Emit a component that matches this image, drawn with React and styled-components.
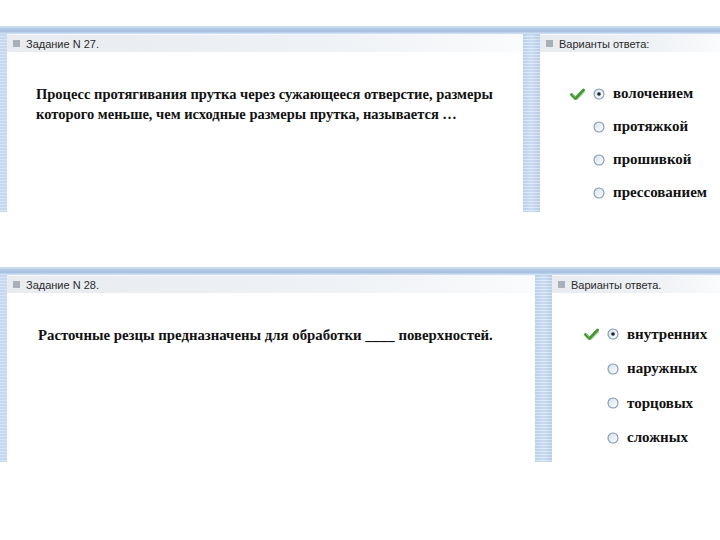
import styled, { createGlobalStyle } from "styled-components";

const GlobalStyle = createGlobalStyle`
  body {
    margin: 0;
    background: #fff;
  }
`;

const tasks = [
  {
    id: 27,
    title: "Задание N 27.",
    side: "Варианты ответа:",
    question: [
      "Процесс протягивания прутка через сужающееся отверстие, размеры",
      "которого меньше, чем исходные размеры прутка, называется …",
    ],
    answers: ["волочением", "протяжкой", "прошивкой", "прессованием"],
    mainWidth: 516,
    height: 178,
    row: 33,
    listTop: 25,
    size: 14.5,
    answerSize: 15,
    textLeft: 29,
    checkLeft: 30,
  },
  {
    id: 28,
    title: "Задание N 28.",
    side: "Варианты ответа.",
    question: ["Расточные резцы предназначены для обработки ____ поверхностей."],
    answers: ["внутренних", "наружных", "торцовых", "сложных"],
    mainWidth: 528,
    height: 187,
    row: 34.5,
    listTop: 24,
    size: 14.8,
    answerSize: 15,
    textLeft: 31,
    checkLeft: 32,
  },
];

function Check() {
  return (
    <svg width="15" height="12" viewBox="0 0 15 12">
      <path d="M1.5 6.5 L5.5 10.5 L13.5 2" fill="none" stroke="#9aa39a" strokeWidth="3.2" strokeLinecap="round" strokeLinejoin="round" transform="translate(0.6 0.8)" opacity="0.5" />
      <path d="M1.5 6.5 L5.5 10.5 L13.5 2" fill="none" stroke="#3f9a2e" strokeWidth="2.8" strokeLinecap="round" strokeLinejoin="round" />
      <path d="M2.5 6.5 L5.5 9.2" fill="none" stroke="#7ccc5f" strokeWidth="1" strokeLinecap="round" />
    </svg>
  );
}

function Radio({ checked }) {
  return (
    <svg width="12" height="12" viewBox="0 0 12 12">
      <defs>
        <linearGradient id="rg" x1="0" y1="0" x2="1" y2="1">
          <stop offset="0" stopColor="#d8dfe8" />
          <stop offset="1" stopColor="#ffffff" />
        </linearGradient>
      </defs>
      <circle cx="6" cy="6" r="5" fill="url(#rg)" stroke="#7f97b6" strokeWidth="1.1" />
      {checked && <circle cx="6" cy="6" r="1.8" fill="#222" />}
    </svg>
  );
}

export default function App() {
  return (
    <>
      <GlobalStyle />
      <Page>
        {tasks.map((t) => (
          <Panel key={t.id}>
            <TopBar />
            <Body $height={t.height}>
              <Stripe />
              <Main $width={t.mainWidth}>
                <Header>
                  <Square />
                  {t.title}
                </Header>
                <Question $size={t.size} $left={t.textLeft}>
                  {t.question.map((line) => (
                    <div key={line}>{line}</div>
                  ))}
                </Question>
              </Main>
              <Separator />
              <Side>
                <Header>
                  <Square />
                  {t.side}
                </Header>
                <Answers $top={t.listTop} $left={t.checkLeft}>
                  {t.answers.map((a, i) => (
                    <Answer key={a} $row={t.row} $size={t.answerSize}>
                      <CheckSlot>{i === 0 && <Check />}</CheckSlot>
                      <Radio checked={i === 0} />
                      <span>{a}</span>
                    </Answer>
                  ))}
                </Answers>
              </Side>
            </Body>
          </Panel>
        ))}
      </Page>
    </>
  );
}

const Page = styled.div`
  width: 720px;
  padding-top: 26px;
  display: flex;
  flex-direction: column;
  gap: 55px;
`;

const Panel = styled.section`
  display: flex;
  flex-direction: column;
`;

const TopBar = styled.div`
  height: 8px;
  background: linear-gradient(
    to bottom,
    #d3e1f2 0%,
    #b4cbe7 35%,
    #a3bee0 65%,
    #d9e6f5 100%
  );
`;

const Body = styled.div`
  height: ${(p) => p.$height}px;
  display: flex;
`;

const Stripe = styled.div`
  width: 7px;
  flex-shrink: 0;
  background: repeating-linear-gradient(
    to bottom,
    #c6d8ef 0px,
    #c6d8ef 2px,
    #d8e5f5 2px,
    #d8e5f5 3px
  );
`;

const Separator = styled.div`
  width: 17px;
  flex-shrink: 0;
  background: repeating-linear-gradient(
      to bottom,
      transparent 0px,
      transparent 2px,
      rgba(255, 255, 255, 0.45) 2px,
      rgba(255, 255, 255, 0.45) 3px
    ),
    linear-gradient(to right, #b9cfea, #c9dbf1 50%, #b4cbe8);
`;

const Main = styled.div`
  width: ${(p) => p.$width}px;
  flex-shrink: 0;
  background: #fff;
`;

const Side = styled.div`
  flex: 1;
  background: #fff;
`;

const Header = styled.div`
  height: 18px;
  display: flex;
  align-items: center;
  gap: 6px;
  padding-left: 6px;
  background: linear-gradient(to right, #e8ecf1, #eef1f5 60%, #fafbfc);
  border-top: 1px solid #f4f7fb;
  box-sizing: border-box;
  font-family: "Liberation Sans", Arial, sans-serif;
  font-size: 11px;
  color: #2a2a2a;
`;

const Square = styled.span`
  width: 7px;
  height: 7px;
  background: #a9b0b8;
`;

const Question = styled.div`
  padding: 32px 0 0 ${(p) => p.$left}px;
  font-family: "Liberation Serif", "Times New Roman", serif;
  font-weight: bold;
  font-size: ${(p) => p.$size}px;
  line-height: 20px;
  color: #111;
  white-space: nowrap;
`;

const Answers = styled.div`
  padding: ${(p) => p.$top}px 0 0 ${(p) => p.$left}px;
  display: flex;
  flex-direction: column;
`;

const Answer = styled.div`
  height: ${(p) => p.$row}px;
  display: flex;
  align-items: center;
  gap: 8px;
  font-family: "Liberation Serif", "Times New Roman", serif;
  font-weight: bold;
  font-size: ${(p) => p.$size}px;
  color: #111;
  white-space: nowrap;
`;

const CheckSlot = styled.span`
  width: 15px;
  height: 12px;
  display: flex;
`;
